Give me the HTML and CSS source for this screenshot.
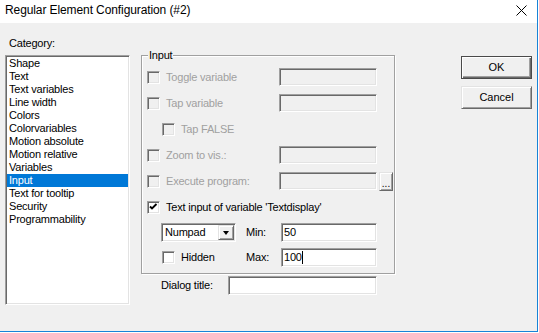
FILE: index.html
```html
<!DOCTYPE html>
<html>
<head>
<meta charset="utf-8">
<link rel="stylesheet" href="styles.css">
</head>
<body>
<div class="window">
  <div class="titlebar">
    <span class="title">Regular Element Configuration (#2)</span>
    <svg class="close" width="11" height="11" viewBox="0 0 11 11"><path d="M0.5 0.5 L10.5 10.5 M10.5 0.5 L0.5 10.5" stroke="#000" stroke-width="1" fill="none"/></svg>
  </div>
  <div class="client">
    <div class="left">
      <div class="cat-label">Category:</div>
      <div class="listbox">
        <div class="item">Shape</div>
        <div class="item">Text</div>
        <div class="item">Text variables</div>
        <div class="item">Line width</div>
        <div class="item">Colors</div>
        <div class="item">Colorvariables</div>
        <div class="item">Motion absolute</div>
        <div class="item">Motion relative</div>
        <div class="item">Variables</div>
        <div class="item selected">Input</div>
        <div class="item">Text for tooltip</div>
        <div class="item">Security</div>
        <div class="item">Programmability</div>
      </div>
    </div>
    <div class="middle">
      <div class="group">
        <span class="legend">Input</span>
        <div class="row">
          <div class="opt disabled"><span class="chk"></span><span>Toggle variable</span></div>
          <span class="field off"></span>
        </div>
        <div class="row">
          <div class="opt disabled"><span class="chk"></span><span>Tap variable</span></div>
          <span class="field off"></span>
        </div>
        <div class="row">
          <div class="opt disabled indent"><span class="chk"></span><span>Tap FALSE</span></div>
        </div>
        <div class="row">
          <div class="opt disabled"><span class="chk"></span><span>Zoom to vis.:</span></div>
          <span class="field off"></span>
        </div>
        <div class="row">
          <div class="opt disabled"><span class="chk"></span><span>Execute program:</span></div>
          <span class="field off"></span>
          <span class="dots">...</span>
        </div>
        <div class="row">
          <div class="opt wide"><span class="chk on"><svg width="11" height="11" viewBox="0 0 11 11"><path d="M2 4.5 L4 6.5 L8.5 2" stroke="#000" stroke-width="1.9" fill="none"/></svg></span><span>Text input of variable 'Textdisplay'</span></div>
        </div>
        <div class="row tight">
          <div class="cell-left pad14">
            <div class="combo"><span class="combo-text">Numpad</span><span class="combo-btn"><span class="tri"></span></span></div>
          </div>
          <span class="lbl">Min:</span>
          <span class="field on small">50</span>
        </div>
        <div class="row tight">
          <div class="cell-left pad15">
            <div class="opt auto"><span class="chk on"></span><span>Hidden</span></div>
          </div>
          <span class="lbl">Max:</span>
          <span class="field on small">100<span class="caret"></span></span>
        </div>
      </div>
      <div class="dlg-row">
        <span class="dlg-label">Dialog title:</span>
        <span class="field on dlg-field"></span>
      </div>
    </div>
    <div class="buttons">
      <div class="btn default">OK</div>
      <div class="btn">Cancel</div>
    </div>
  </div>
</div>
</body>
</html>
```

FILE: styles.css
```css
html { background: #ffffff; }
body {
  margin: 0;
  font-family: "Liberation Sans", Arial, sans-serif;
  font-size: 11px;
  line-height: 13px;
  color: #000;
}
.window {
  width: 538px;
  height: 332px;
  box-sizing: border-box;
  border-right: 1px solid #1883d7;
  border-bottom: 1px solid #1883d7;
  background: #f0f0f0;
  display: flex;
  flex-direction: column;
}
.titlebar {
  height: 23px;
  flex: none;
  background: #fff;
  display: flex;
  justify-content: space-between;
  align-items: flex-start;
  padding-left: 5px;
}
.title {
  font-size: 12px;
  line-height: 14px;
  margin-top: 3px;
  letter-spacing: -0.1px;
}
.close {
  margin-top: 5px;
  margin-right: 10px;
}
.client {
  flex: 1;
  display: flex;
  padding-left: 5px;
  letter-spacing: -0.2px;
}
.left {
  width: 125px;
  display: flex;
  flex-direction: column;
}
.cat-label {
  margin-top: 14px;
  padding-left: 4px;
  height: 13px;
}
.listbox {
  margin-top: 5px;
  height: 250px;
  box-sizing: border-box;
  background: #fff;
  border: 1px solid;
  border-color: #a0a0a0 #fff #fff #a0a0a0;
  box-shadow: inset 1px 1px #696969, inset -1px -1px #e3e3e3;
  padding: 1px;
}
.item {
  height: 13px;
  padding-left: 2px;
  white-space: nowrap;
}
.item.selected {
  background: #0078d7;
  color: #fff;
}
.middle {
  margin-left: 11px;
  width: 254px;
  display: flex;
  flex-direction: column;
}
.group {
  position: relative;
  margin-top: 32px;
  height: 219px;
  box-sizing: border-box;
  border: 1px solid #a0a0a0;
  box-shadow: inset 1px 1px #fff, 1px 1px #fff;
  padding: 11px 0 0 5px;
}
.legend {
  position: absolute;
  top: -7px;
  left: 6px;
  padding: 0 1px;
  background: #f0f0f0;
}
.row {
  display: flex;
  align-items: center;
  height: 20px;
  margin-top: 6px;
}
.row:first-of-type { margin-top: 0; }
.legend + .row { margin-top: 0; }
.row.tight { margin-top: 5px; }
.opt {
  width: 132px;
  display: flex;
  align-items: center;
  gap: 6px;
  white-space: nowrap;
}
.opt.indent { padding-left: 15px; width: 117px; }
.opt.wide { width: auto; }
.opt.auto { width: auto; }
.opt.disabled { color: #a0a0a0; }
.chk {
  width: 13px;
  height: 13px;
  box-sizing: border-box;
  flex: none;
  border: 1px solid;
  border-color: #a0a0a0 #fff #fff #a0a0a0;
  box-shadow: inset 1px 1px #696969, inset -1px -1px #e3e3e3;
  background: #f0f0f0;
  display: flex;
}
.chk.on { background: #fff; }
.chk svg { display: block; }
.field {
  box-sizing: border-box;
  width: 98px;
  height: 18px;
  border: 1px solid;
  border-color: #a0a0a0 #fff #fff #a0a0a0;
  box-shadow: inset 1px 1px #696969, inset -1px -1px #e3e3e3;
  padding-left: 2px;
  display: flex;
  align-items: center;
}
.field.off { background: #f0f0f0; }
.field.on { background: #fff; }
.field.small { width: 96px; height: 19px; }
.dots {
  margin-left: 2px;
  width: 14px;
  height: 19px;
  box-sizing: border-box;
  border: 1px solid;
  border-color: #e3e3e3 #696969 #696969 #e3e3e3;
  box-shadow: inset 1px 1px #fff, inset -1px -1px #a0a0a0;
  display: flex;
  align-items: flex-end;
  justify-content: center;
  line-height: 12px;
  letter-spacing: 0;
  font-size: 10px;
}
.cell-left {
  width: 99px;
  box-sizing: border-box;
  display: flex;
  align-items: center;
}
.pad14 { padding-left: 14px; }
.pad15 { padding-left: 15px; }
.combo {
  width: 75px;
  height: 19px;
  box-sizing: border-box;
  background: #fff;
  border: 1px solid;
  border-color: #a0a0a0 #fff #fff #a0a0a0;
  box-shadow: inset 1px 1px #696969, inset -1px -1px #e3e3e3;
  display: flex;
  align-items: center;
  justify-content: space-between;
  padding: 1px 1px 1px 3px;
}
.combo-btn {
  width: 16px;
  height: 15px;
  box-sizing: border-box;
  background: #f0f0f0;
  border: 1px solid;
  border-color: #e3e3e3 #696969 #696969 #e3e3e3;
  box-shadow: inset 1px 1px #fff, inset -1px -1px #a0a0a0;
  display: flex;
  align-items: center;
  justify-content: center;
}
.tri {
  width: 0;
  height: 0;
  border-left: 3.5px solid transparent;
  border-right: 3.5px solid transparent;
  border-top: 4px solid #000;
  margin-top: 1px;
}
.lbl {
  width: 35px;
}
.caret {
  width: 1px;
  height: 13px;
  background: #000;
  margin-left: 0px;
}
.dlg-row {
  display: flex;
  align-items: center;
  margin-top: 2px;
  padding-left: 20px;
  height: 19px;
}
.dlg-label { width: 67px; white-space: nowrap; }
.dlg-field { width: 149px; height: 19px; }
.buttons {
  margin-left: 66px;
  display: flex;
  flex-direction: column;
  gap: 7px;
  padding-top: 33px;
}
.btn {
  width: 71px;
  height: 23px;
  box-sizing: border-box;
  border: 1px solid;
  border-color: #e3e3e3 #696969 #696969 #e3e3e3;
  box-shadow: inset 1px 1px #fff, inset -1px -1px #a0a0a0;
  display: flex;
  align-items: center;
  justify-content: center;
  letter-spacing: 0;
}
.btn.default {
  border: 1px solid #4a4a4a;
  box-shadow: inset 1px 1px #fff, inset -1px -1px #696969, inset -2px -2px #a0a0a0;
}
```
